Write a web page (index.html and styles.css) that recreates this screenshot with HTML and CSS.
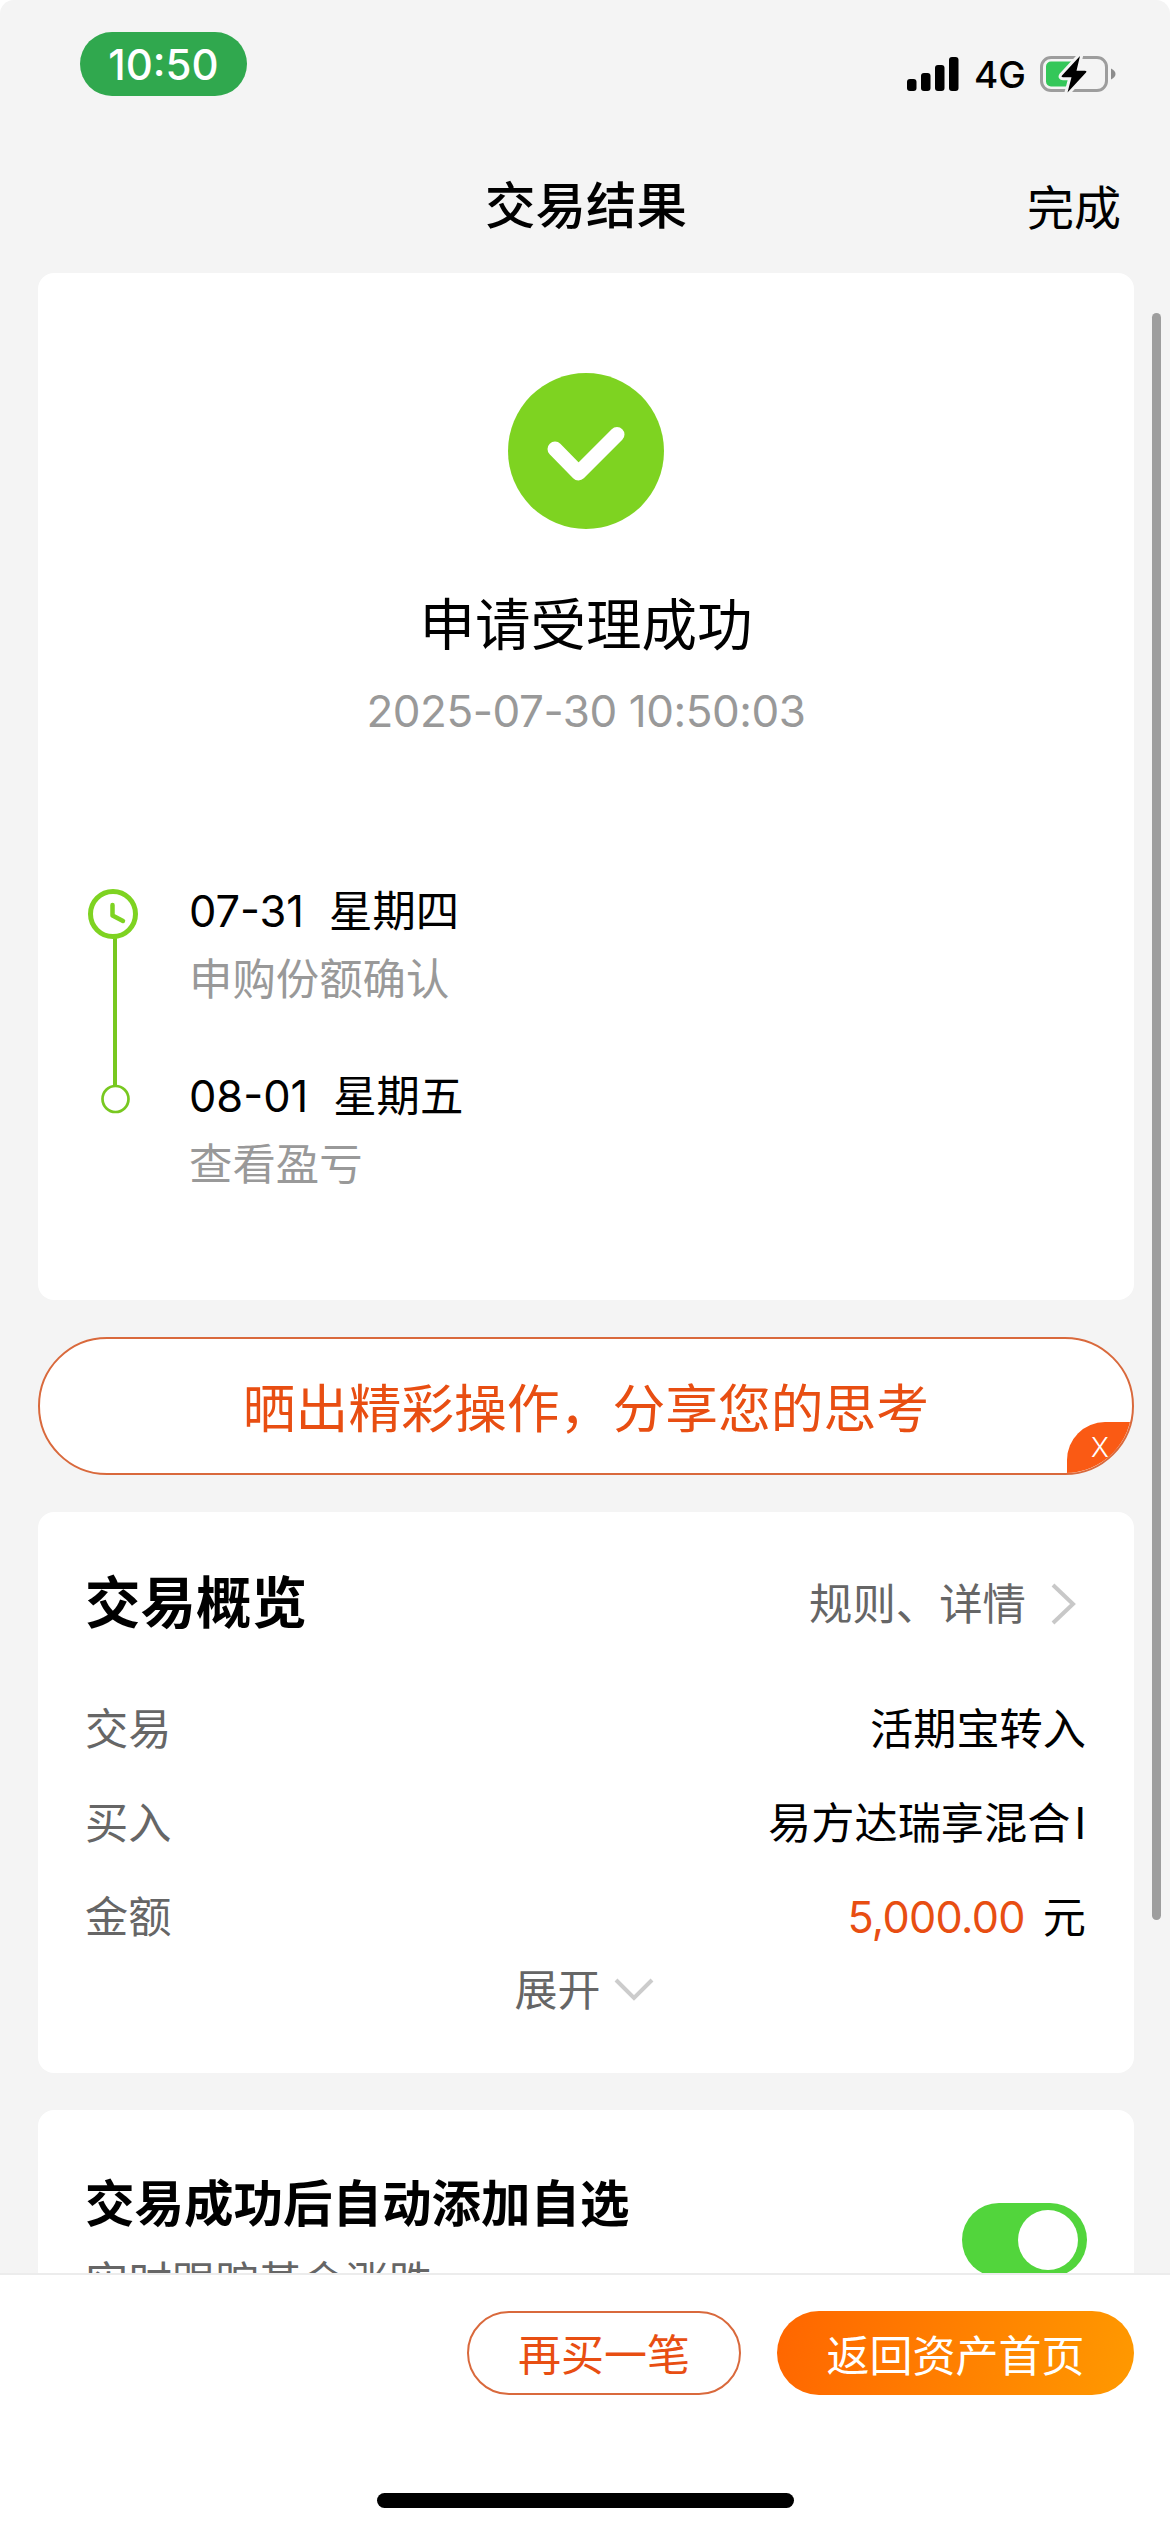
FILE: index.html
```html
<!DOCTYPE html>
<html lang="zh-CN">
<head>
<meta charset="utf-8">
<title>交易结果</title>
<link rel="stylesheet" href="styles.css">
</head>
<body>
<div class="screen">
  <header class="top">
    <div class="status">
      <span class="clock">10:50</span>
      <div class="status-right">
        <svg class="signal" width="52" height="34" viewBox="0 0 52 34">
          <rect x="0" y="22" width="9.5" height="12" rx="3"/>
          <rect x="14" y="16" width="9.5" height="18" rx="3"/>
          <rect x="28" y="8" width="9.5" height="26" rx="3"/>
          <rect x="42" y="0" width="9.5" height="34" rx="3"/>
        </svg>
        <span class="network">4G</span>
        <svg class="battery" width="76" height="40" viewBox="0 0 76 40">
          <rect x="1.5" y="3.5" width="65" height="33" rx="9.5" fill="none" stroke="#9d9d9d" stroke-width="3"/>
          <path d="M71 14.5c6 3 6 8 0 11z" fill="#8c8c8c"/>
          <path d="M11 7.500h20v25H11a5 5 0 0 1-5-5v-15a5 5 0 0 1 5-5z" fill="#34c759"/>
          <path d="M40 2L22 21.500q-1.200 1.700 1 1.700h8.500L27.500 38.500 46 18.500q1.200-1.700-1-1.700h-8.500z" fill="#000" stroke="#f4f4f4" stroke-width="6" paint-order="stroke" stroke-linejoin="round"/>
        </svg>
      </div>
    </div>
    <div class="nav">
      <h1 class="nav-title">交易结果</h1>
      <span class="nav-done">完成</span>
    </div>
  </header>

  <main class="content">
    <section class="card result">
      <svg class="result-icon" width="156" height="156" viewBox="0 0 156 156">
        <circle cx="78" cy="78" r="78" fill="#7ed321"/>
        <path d="M47 76l23.500 24L109 61.500" fill="none" stroke="#fff" stroke-width="15" stroke-linecap="round" stroke-linejoin="round"/>
      </svg>
      <h2 class="result-title">申请受理成功</h2>
      <p class="result-time">2025-07-30 10:50:03</p>
      <div class="timeline">
        <svg class="rail" width="60" height="240" viewBox="0 0 60 240">
          <path d="M29 57v150" stroke="#78c820" stroke-width="4"/>
          <circle cx="27" cy="33" r="22.500" fill="#fff" stroke="#7ed321" stroke-width="5"/>
          <path d="M26.500 24v10.500L37 40" fill="none" stroke="#7ed321" stroke-width="4.500" stroke-linecap="round" stroke-linejoin="round"/>
          <circle cx="29.500" cy="218" r="13" fill="#fff" stroke="#78c820" stroke-width="2.700"/>
        </svg>
        <ol class="steps">
          <li><div class="step-date"><span>07-31</span><span>星期四</span></div><div class="step-note">申购份额确认</div></li>
          <li><div class="step-date"><span>08-01</span><span>星期五</span></div><div class="step-note">查看盈亏</div></li>
        </ol>
      </div>
    </section>

    <section class="share">
      <span class="share-text">晒出精彩操作，分享您的思考</span>
      <span class="share-close">X</span>
    </section>

    <section class="card overview">
      <div class="overview-head">
        <h2 class="overview-title">交易概览</h2>
        <span class="overview-link">规则、详情
          <svg width="28" height="42" viewBox="0 0 28 42"><path d="M3 2l20 19L3 40" fill="none" stroke="#c8c8c8" stroke-width="4"/></svg>
        </span>
      </div>
      <dl class="rows">
        <div class="row"><dt>交易</dt><dd>活期宝转入</dd></div>
        <div class="row"><dt>买入</dt><dd>易方达瑞享混合<span class="share-class">I</span></dd></div>
        <div class="row"><dt>金额</dt><dd><span class="amount">5,000.00</span>元</dd></div>
      </dl>
      <div class="expand">展开
        <svg width="40" height="24" viewBox="0 0 40 24"><path d="M2 2l18 18L38 2" fill="none" stroke="#ccc" stroke-width="4"/></svg>
      </div>
    </section>

    <section class="card favorite">
      <div>
        <h2 class="favorite-title">交易成功后自动添加自选</h2>
        <p class="favorite-note">实时跟踪基金涨跌</p>
      </div>
      <span class="toggle"><span class="knob"></span></span>
    </section>
  </main>

  <footer class="footer">
    <div class="actions">
      <span class="button outline">再买一笔</span>
      <span class="button primary">返回资产首页</span>
    </div>
    <div class="home-bar"></div>
  </footer>
  <div class="scrollbar"></div>
</div>
</body>
</html>
```

FILE: styles.css
```css
* { box-sizing: border-box; margin: 0; padding: 0; }
body {
  background: #fff;
  font-family: Inter, "Noto Sans CJK SC", sans-serif;
  font-size: 43.400px;
  line-height: 60px;
  color: #000;
}
svg { display: block; flex: none; }
ol { list-style: none; }

.screen {
  position: relative;
  width: 1170px;
  height: 2532px;
  overflow: hidden;
  display: flex;
  flex-direction: column;
  background: #f4f4f4;
  border-radius: 14px 14px 0 0;
}

.top { height: 273px; flex: none; }
.status {
  height: 128px;
  padding: 32px 54px 0 80px;
  display: flex;
  justify-content: space-between;
  align-items: flex-start;
}
.clock {
  width: 167px;
  height: 64px;
  border-radius: 32px;
  background: #30a84e;
  color: #fff;
  font-size: 42px;
  font-weight: 500;
  line-height: 65px;
  text-align: center;
}
.status-right {
  height: 40px;
  margin-top: 22px;
  display: flex;
  align-items: center;
}
.network {
  margin: 2px 0 0 15px;
  width: 66px;
  font-size: 37px;
  font-weight: 450;
}
.nav {
  height: 145px;
  padding: 0 49px 0 51px;
  display: grid;
  grid-template-columns: 1fr auto 1fr;
  align-items: start;
}
.nav-title {
  grid-column: 2;
  padding-top: 48px;
  font-size: 50.500px;
  font-weight: 500;
}
.nav-done {
  justify-self: end;
  padding-top: 50px;
  font-size: 47px;
}

.content {
  height: 2000px;
  flex: none;
  overflow: hidden;
  padding: 0 36px 0 38px;
  display: flex;
  flex-direction: column;
  gap: 37px;
}
.card { flex: none; background: #fff; border-radius: 16px; }

.result {
  height: 1027px;
  padding-top: 100px;
  display: flex;
  flex-direction: column;
  align-items: center;
}
.result-title {
  margin-top: 63px;
  font-size: 55.500px;
  font-weight: 400;
  line-height: 66px;
}
.result-time {
  margin-top: 23px;
  font-size: 44px;
  letter-spacing: -0.450px;
  color: #999;
}
.timeline {
  align-self: stretch;
  margin-top: 140px;
  padding-left: 48px;
  display: flex;
  gap: 43px;
}
.steps { display: grid; gap: 57px; }
.step-date { display: flex; gap: 25px; }
.step-note { margin-top: 8px; color: #999; }

.share {
  position: relative;
  height: 138px;
  flex: none;
  overflow: hidden;
  display: flex;
  align-items: center;
  justify-content: center;
  border: 2px solid #d9693c;
  border-radius: 69px;
  background: #fff;
}
.share-text {
  padding-top: 6px;
  font-size: 52.800px;
  color: #e84e12;
}
.share-close {
  position: absolute;
  right: 0;
  bottom: 0;
  width: 65px;
  height: 51px;
  padding-left: 24px;
  border-radius: 38px 0 0 0;
  background: #fa5a14;
  color: #fff;
  font-size: 27px;
  font-weight: 300;
  line-height: 52px;
}

.overview { height: 561px; padding: 58px 48px 0; }
.overview-head {
  height: 66px;
  display: flex;
  align-items: center;
  justify-content: space-between;
}
.overview-title { margin-left: -1px; font-size: 55.500px; font-weight: 700; line-height: 66px; }
.overview-link {
  display: flex;
  align-items: center;
  gap: 24px;
  padding: 2px 8px 0 0;
  color: #666;
}
.rows { margin-top: 63px; display: grid; gap: 34px; font-size: 43.200px; }
.row { display: flex; justify-content: space-between; }
.row dt { margin-left: -1px; color: #666; }
.share-class { margin-left: 4px; }
.amount { margin-right: 18px; letter-spacing: -0.700px; color: #e84e12; }
.expand {
  margin: 13px 4px 0 0;
  display: flex;
  align-items: center;
  justify-content: center;
  gap: 13px;
  font-size: 43px;
  color: #666;
}

.favorite {
  height: 240px;
  padding: 64px 47px 0 47px;
  display: flex;
  justify-content: space-between;
  align-items: flex-start;
}
.favorite-title { font-size: 49.500px; font-weight: 700; }
.favorite-note { margin-top: 18px; color: #666; }
.toggle {
  width: 125px;
  height: 74px;
  margin-top: 29px;
  padding: 7px 9px;
  display: flex;
  justify-content: flex-end;
  border-radius: 37px;
  background: #52d53c;
}
.knob { width: 60px; height: 60px; border-radius: 50%; background: #fff; }

.footer {
  height: 259px;
  flex: none;
  padding-top: 36px;
  border-top: 2px solid #ececec;
  background: #fff;
  display: flex;
  flex-direction: column;
  justify-content: space-between;
  align-items: center;
}
.actions {
  align-self: stretch;
  padding-right: 36px;
  display: flex;
  justify-content: flex-end;
  gap: 36px;
}
.button {
  height: 84px;
  display: flex;
  align-items: center;
  justify-content: center;
  padding-top: 5px;
  border-radius: 42px;
  font-size: 43px;
}
.outline { width: 274px; border: 2px solid #d9693c; color: #e84e12; padding-top: 4px; }
.primary { width: 357px; background: linear-gradient(100deg, #ff6600, #ff9900); color: #fff; }
.home-bar {
  width: 417px;
  height: 15px;
  margin-bottom: 24px;
  border-radius: 8px;
  background: #000;
}
.scrollbar {
  position: absolute;
  left: 1152px;
  top: 313px;
  width: 9px;
  height: 1607px;
  border-radius: 5px;
  background: #9e9e9e;
}
```
